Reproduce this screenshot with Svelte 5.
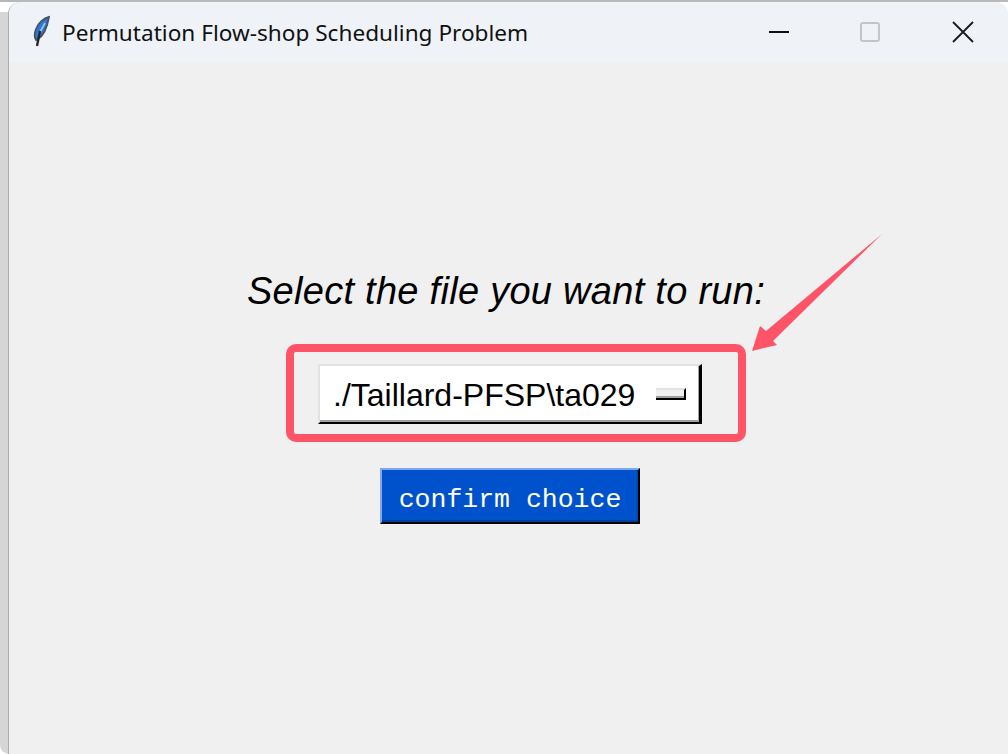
<script>
  let path = './Taillard-PFSP\\ta029'
</script>

<div class="screen">
  <div class="edge"></div>
  <div class="window">
    <header class="titlebar">
      <svg class="feather" width="24" height="34" viewBox="0 0 24 34">
        <path d="M20 3 C15 4 9 9 7 15 C5 20 5 23 7 26 L9 25 C14 22 18 14 20 3 Z" fill="#2f78d8" stroke="#49525f" stroke-width="1.8" />
        <path d="M16 9 L10 20" stroke="#9cc4f0" stroke-width="1.6" fill="none" />
        <path d="M11 17 L8 32" stroke="#22262c" stroke-width="2.4" fill="none" />
      </svg>
      <span class="title">Permutation Flow-shop Scheduling Problem</span>
      <div class="controls">
        <svg width="22" height="22" viewBox="0 0 22 22"><path d="M1 11 H21" stroke="#111" stroke-width="2" /></svg>
        <svg class="max" width="22" height="22" viewBox="0 0 22 22"><rect x="2" y="2" width="18" height="18" rx="2" fill="none" stroke="#c2c5c9" stroke-width="2" /></svg>
        <svg class="close" width="22" height="22" viewBox="0 0 22 22"><path d="M1 1 L21 21 M21 1 L1 21" stroke="#1a1a1a" stroke-width="1.8" fill="none" /></svg>
      </div>
    </header>

    <main class="content">
      <p class="prompt">Select the file you want to run:</p>
      <div class="menu">
        <span>{path}</span>
        <i class="indicator"></i>
        <div class="highlight"></div>
      </div>
      <button class="confirm">confirm choice</button>
    </main>
  </div>

  <svg class="arrow" width="140" height="125" viewBox="0 0 140 125">
    <polygon points="0,117 8,92 14,97 130,0 21,107 25,111" fill="#ff5468" />
  </svg>
</div>

<style>
  :global(body) {
    background: #fff;
  }

  .screen {
    position: relative;
    display: flex;
    width: 1008px;
    height: 754px;
    overflow: hidden;
    padding-top: 2px;
    box-sizing: border-box;
    background: linear-gradient(#b9b9b9 0 2px, #fff 2px);
  }

  .edge {
    width: 9px;
    margin-top: 10px;
    box-sizing: border-box;
    background: #d6d6d6;
    border-right: 1px solid #acacac;
    border-bottom-left-radius: 12px;
  }

  .window {
    flex: 1;
    display: flex;
    flex-direction: column;
    margin-left: -1px;
    background: #f0f0f0;
    border-radius: 12px 12px 0 0;
    border-left: 1px solid #acacac;
    overflow: hidden;
  }

  .titlebar {
    display: flex;
    align-items: center;
    height: 60px;
    flex-shrink: 0;
    padding-left: 20px;
    background: #eff3f8;
  }

  .feather {
    margin-top: -2px;
  }

  .title {
    margin-left: 9px;
    font-family: 'Noto Sans', sans-serif;
    font-size: 22.6px;
    color: #111;
    white-space: nowrap;
  }

  .controls {
    display: flex;
    align-items: center;
    gap: 70px;
    margin-left: auto;
    padding-right: 34px;
  }

  .max {
    margin-left: -1px;
    margin-right: 1px;
  }

  .content {
    display: flex;
    flex-direction: column;
    align-items: center;
    padding: 208px 0 0 3px;
  }

  .prompt {
    margin: 0 8px 0 0;
    height: 42px;
    line-height: 42px;
    font-family: 'Liberation Sans', sans-serif;
    font-size: 38px;
    letter-spacing: 0.28px;
    font-style: italic;
    color: #000;
    white-space: nowrap;
  }

  .menu {
    position: relative;
    display: flex;
    align-items: center;
    justify-content: space-between;
    width: 384px;
    height: 60px;
    margin-top: 52px;
    padding: 0 13px;
    box-sizing: border-box;
    background: #fff;
    border-top: 2px solid #e3e3e3;
    border-left: 2px solid #e3e3e3;
    border-right: 3px solid #000;
    border-bottom: 2px solid #000;
    box-shadow: inset -1px -2px 0 #a0a0a0;
    font-family: 'Liberation Sans', sans-serif;
    font-size: 32px;
    line-height: 60px;
    color: #000;
    white-space: nowrap;
  }

  .menu span {
    padding-top: 1px;
  }

  .indicator {
    display: block;
    width: 30px;
    height: 12px;
    box-sizing: border-box;
    background: #f0f0f0;
    border-top: 2px solid #e3e3e3;
    border-bottom: 2px solid #000;
    border-right: 2px solid #000;
    box-shadow: inset 0 -2px 0 #a0a0a0;
  }

  .highlight {
    position: absolute;
    left: -34px;
    top: -22px;
    width: 460px;
    height: 98px;
    box-sizing: border-box;
    border: 8px solid #ff5468;
    border-radius: 10px;
  }

  .confirm {
    width: 260px;
    height: 56px;
    margin-top: 44px;
    padding: 8px 0 0;
    box-sizing: border-box;
    background: #0052cc;
    border-top: 2px solid #7fa6f5;
    border-left: 2px solid #7fa6f5;
    border-right: 2px solid #000;
    border-bottom: 2px solid #000;
    box-shadow: inset -1px -2px 0 #0040a0;
    font-family: 'Liberation Mono', monospace;
    font-size: 26.5px;
    color: #fff;
  }

  .arrow {
    position: absolute;
    left: 752px;
    top: 234px;
  }
</style>
